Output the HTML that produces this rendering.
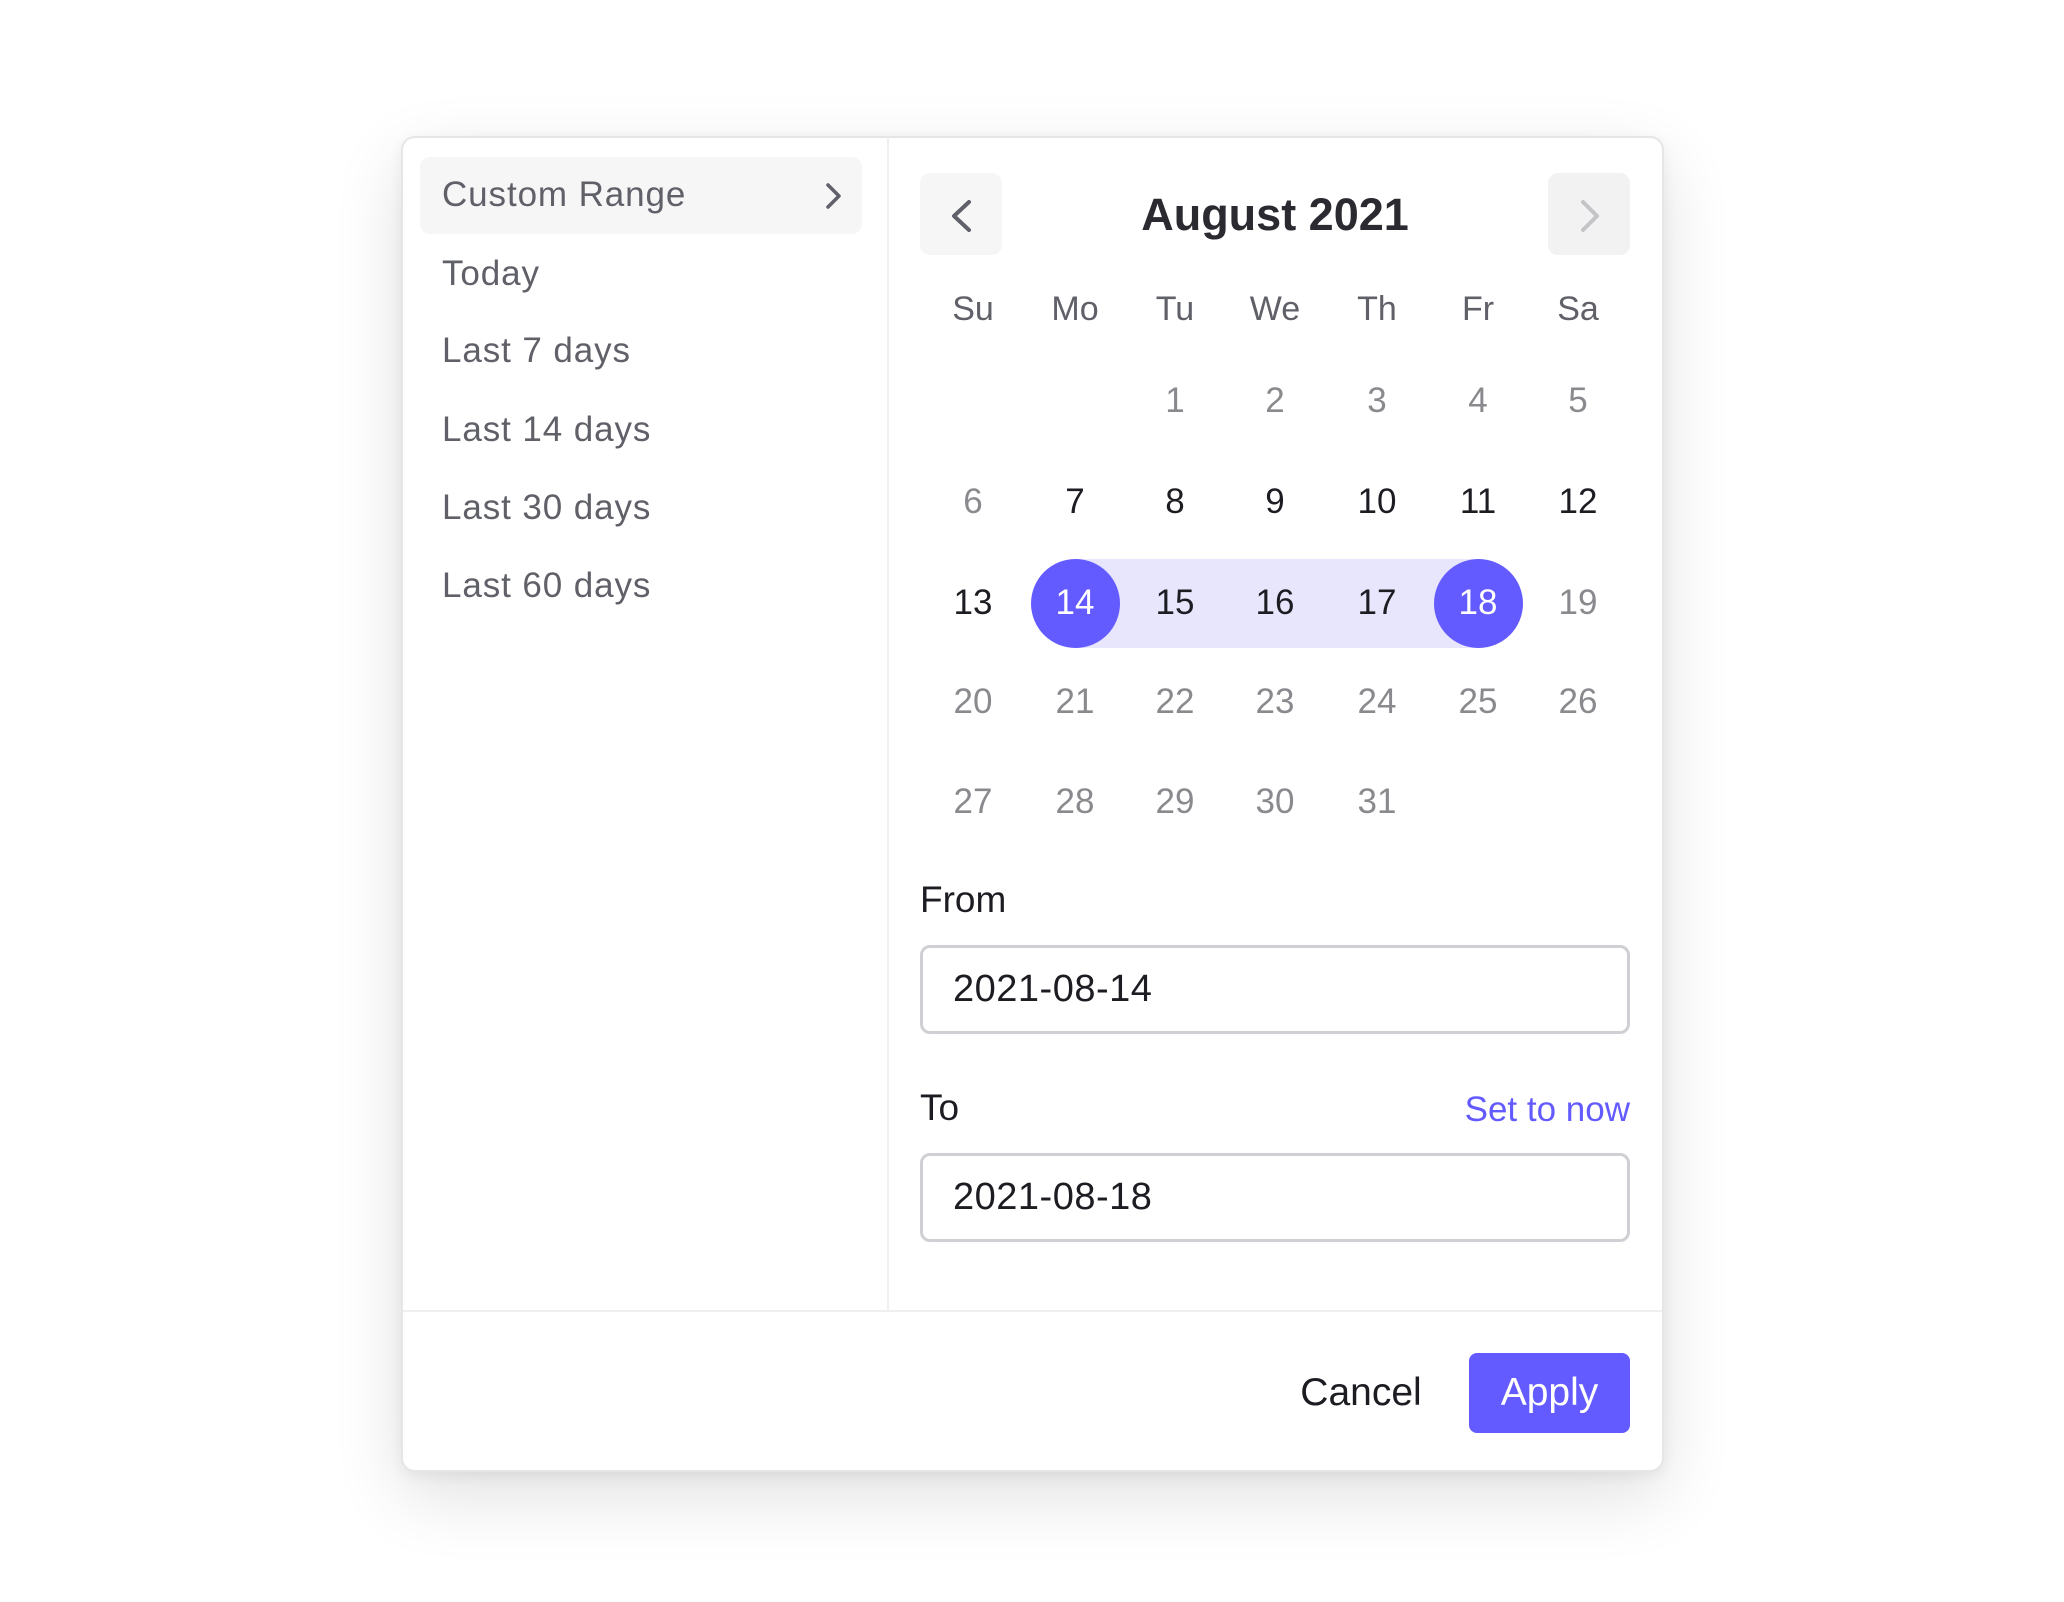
<!DOCTYPE html>
<html><head><meta charset="utf-8"><style>
*{margin:0;padding:0;box-sizing:border-box}
body{width:2064px;height:1602px;background:#fff;font-family:"Liberation Sans",sans-serif;position:relative;overflow:hidden}
.card{position:absolute;left:401px;top:136px;width:1263px;height:1336px;background:#fff;border:2px solid #e6e6e8;border-radius:14px;box-shadow:0 24px 70px rgba(0,0,0,0.12),0 4px 14px rgba(0,0,0,0.06)}
.abs{position:absolute}
.side{position:absolute;left:442px;font-size:35px;color:#5f6068;letter-spacing:0.9px;line-height:40px}
.hd{position:absolute;top:289px;width:100px;text-align:center;font-size:34px;color:#5f6068;line-height:40px}
.d{position:absolute;width:100px;text-align:center;font-size:35px;line-height:40px;color:#8a8a8e}
.dk{color:#1c1c22}
.w{color:#fff}
.lbl{position:absolute;left:920px;font-size:37px;color:#1c1c22;line-height:44px}
.inp{position:absolute;left:920px;width:710px;height:89px;border:3px solid #cfcfd4;border-radius:10px;font-size:38px;color:#1c1c22;padding-left:30px;line-height:83px;letter-spacing:0.5px}
</style></head><body>
<div class="card"></div>
<div class="abs" style="left:887px;top:137px;width:2px;height:1174px;background:#efeff1"></div>
<div class="abs" style="left:403px;top:1310px;width:1259px;height:2px;background:#efeff1"></div>

<div class="abs" style="left:420px;top:157px;width:442px;height:77px;background:#f6f6f7;border-radius:10px"></div>
<div class="side" style="top:175px">Custom Range</div>
<svg class="abs" style="left:820px;top:180px" width="30" height="32"><path d="M8 5 L19 16 L8 27" fill="none" stroke="#5f6068" stroke-width="3.5" stroke-linecap="round" stroke-linejoin="round"/></svg>
<div class="side" style="top:254px">Today</div>
<div class="side" style="top:331px">Last 7 days</div>
<div class="side" style="top:410px">Last 14 days</div>
<div class="side" style="top:488px">Last 30 days</div>
<div class="side" style="top:566px">Last 60 days</div>

<div class="abs" style="left:920px;top:173px;width:82px;height:82px;background:#f6f6f7;border-radius:10px"></div>
<svg class="abs" style="left:920px;top:173px" width="82" height="82"><path d="M49 29 L34 43 L49 57" fill="none" stroke="#5f6068" stroke-width="4" stroke-linecap="round" stroke-linejoin="round"/></svg>
<div class="abs" style="left:1548px;top:173px;width:82px;height:82px;background:#f2f2f3;border-radius:10px"></div>
<svg class="abs" style="left:1548px;top:173px" width="82" height="82"><path d="M35 29 L49 43 L35 57" fill="none" stroke="#c4c4c8" stroke-width="4" stroke-linecap="round" stroke-linejoin="round"/></svg>
<div class="abs" style="left:1075px;top:188px;width:400px;text-align:center;font-size:45px;font-weight:bold;color:#2a2a30;line-height:54px">August 2021</div>

<div class="hd" style="left:923px">Su</div>
<div class="hd" style="left:1025px">Mo</div>
<div class="hd" style="left:1125px">Tu</div>
<div class="hd" style="left:1225px">We</div>
<div class="hd" style="left:1327px">Th</div>
<div class="hd" style="left:1428px">Fr</div>
<div class="hd" style="left:1528px">Sa</div>

<div class="abs" style="left:1075px;top:559px;width:403px;height:89px;background:#e8e6fd"></div>
<div class="abs" style="left:1031px;top:559px;width:89px;height:89px;border-radius:50%;background:#635bff"></div>
<div class="abs" style="left:1434px;top:559px;width:89px;height:89px;border-radius:50%;background:#635bff"></div>

<div class="d" style="left:1125px;top:381px">1</div>
<div class="d" style="left:1225px;top:381px">2</div>
<div class="d" style="left:1327px;top:381px">3</div>
<div class="d" style="left:1428px;top:381px">4</div>
<div class="d" style="left:1528px;top:381px">5</div>
<div class="d" style="left:923px;top:482px">6</div>
<div class="d dk" style="left:1025px;top:482px">7</div>
<div class="d dk" style="left:1125px;top:482px">8</div>
<div class="d dk" style="left:1225px;top:482px">9</div>
<div class="d dk" style="left:1327px;top:482px">10</div>
<div class="d dk" style="left:1428px;top:482px">11</div>
<div class="d dk" style="left:1528px;top:482px">12</div>
<div class="d dk" style="left:923px;top:583px">13</div>
<div class="d w" style="left:1025px;top:583px">14</div>
<div class="d dk" style="left:1125px;top:583px">15</div>
<div class="d dk" style="left:1225px;top:583px">16</div>
<div class="d dk" style="left:1327px;top:583px">17</div>
<div class="d w" style="left:1428px;top:583px">18</div>
<div class="d" style="left:1528px;top:583px">19</div>
<div class="d" style="left:923px;top:682px">20</div>
<div class="d" style="left:1025px;top:682px">21</div>
<div class="d" style="left:1125px;top:682px">22</div>
<div class="d" style="left:1225px;top:682px">23</div>
<div class="d" style="left:1327px;top:682px">24</div>
<div class="d" style="left:1428px;top:682px">25</div>
<div class="d" style="left:1528px;top:682px">26</div>
<div class="d" style="left:923px;top:782px">27</div>
<div class="d" style="left:1025px;top:782px">28</div>
<div class="d" style="left:1125px;top:782px">29</div>
<div class="d" style="left:1225px;top:782px">30</div>
<div class="d" style="left:1327px;top:782px">31</div>

<div class="lbl" style="top:878px">From</div>
<div class="inp" style="top:945px">2021-08-14</div>
<div class="lbl" style="top:1086px">To</div>
<div class="abs" style="left:1400px;top:1088px;width:230px;text-align:right;font-size:35px;color:#635bff;line-height:44px">Set to now</div>
<div class="inp" style="top:1153px">2021-08-18</div>

<div class="abs" style="left:1260px;top:1371px;width:202px;text-align:center;font-size:39px;color:#1c1c22;line-height:44px">Cancel</div>
<div class="abs" style="left:1469px;top:1353px;width:161px;height:80px;background:#635bff;border-radius:8px;color:#fff;font-size:39px;text-align:center;line-height:80px">Apply</div>
</body></html>
